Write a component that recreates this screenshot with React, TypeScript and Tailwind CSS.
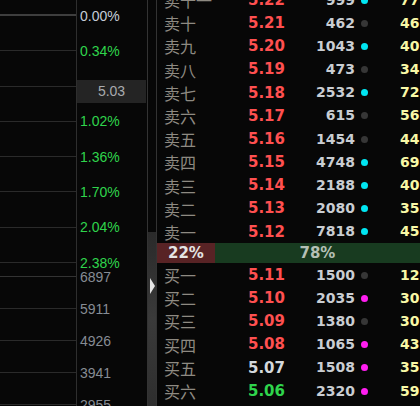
import React from 'react';

type Row = {
  label: string;
  price: string;
  qty: string;
  dot: 'c' | 'g' | 'm';
  last: string;
  priceColor?: string;
};

const sells: Row[] = [
  { label: '卖十一', price: '5.22', qty: '999', dot: 'c', last: '77' },
  { label: '卖十', price: '5.21', qty: '462', dot: 'g', last: '46' },
  { label: '卖九', price: '5.20', qty: '1043', dot: 'c', last: '40' },
  { label: '卖八', price: '5.19', qty: '473', dot: 'g', last: '34' },
  { label: '卖七', price: '5.18', qty: '2532', dot: 'c', last: '72' },
  { label: '卖六', price: '5.17', qty: '615', dot: 'g', last: '56' },
  { label: '卖五', price: '5.16', qty: '1454', dot: 'g', last: '44' },
  { label: '卖四', price: '5.15', qty: '4748', dot: 'c', last: '69' },
  { label: '卖三', price: '5.14', qty: '2188', dot: 'c', last: '40' },
  { label: '卖二', price: '5.13', qty: '2080', dot: 'c', last: '35' },
  { label: '卖一', price: '5.12', qty: '7818', dot: 'c', last: '45' },
];

const buys: Row[] = [
  { label: '买一', price: '5.11', qty: '1500', dot: 'g', last: '12' },
  { label: '买二', price: '5.10', qty: '2035', dot: 'm', last: '30' },
  { label: '买三', price: '5.09', qty: '1380', dot: 'g', last: '30' },
  { label: '买四', price: '5.08', qty: '1065', dot: 'm', last: '43' },
  { label: '买五', price: '5.07', qty: '1508', dot: 'm', last: '35', priceColor: 'text-[#d4d8dc]' },
  { label: '买六', price: '5.06', qty: '2320', dot: 'm', last: '59', priceColor: 'text-[#2fd44c]' },
  { label: '买七', price: '5.05', qty: '1876', dot: 'm', last: '41', priceColor: 'text-[#2fd44c]' },
];

const dotColor = {
  c: 'bg-[#00e6f2]',
  g: 'bg-[#363636]',
  m: 'bg-[#ff1ef0]',
};

const percents = ['0.00%', '0.34%', '', '1.02%', '1.36%', '1.70%', '2.04%', '2.38%'];
const volumes = ['6897', '5911', '4926', '3941', '2955'];

const BookRow = ({ row }: { row: Row }) => (
  <div className="flex items-center h-[23.2px] shrink-0 whitespace-nowrap">
    <div className="w-[57px] pl-[7px] text-[16px] leading-none text-[#8e8a82] font-['Noto_Sans_CJK_SC',sans-serif]">
      {row.label}
    </div>
    <div
      className={`w-[71px] text-right text-[15px] font-bold font-['DejaVu_Sans',sans-serif] ${
        row.priceColor ?? 'text-[#ff5050]'
      }`}
    >
      {row.price}
    </div>
    <div className="w-[70px] text-right text-[14px] font-bold text-[#c9cdd2] font-['DejaVu_Sans',sans-serif]">
      {row.qty}
    </div>
    <div className={`ml-[6px] w-[7px] h-[7px] rounded-full ${dotColor[row.dot]}`} />
    <div className="ml-[32px] text-[14px] font-bold text-[#f8f8a6] font-['DejaVu_Sans',sans-serif]">
      {row.last}
    </div>
  </div>
);

export default function App() {
  return (
    <div className="w-[420px] h-[406px] bg-[#070707] overflow-hidden flex font-['Liberation_Sans',Arial,sans-serif]">
      {/* chart grid */}
      <div className="w-[77px] shrink-0 flex flex-col border-r border-[#2e2e2e]">
        <div className="h-[277px] shrink-0 flex flex-col border-b border-[#333]">
          <div className="h-[16px] shrink-0 border-b-2 border-[#3e3e3e]" />
          {[0, 1, 2, 3, 4, 5, 6].map((i) => (
            <div key={i} className="h-[35.3px] shrink-0 border-b border-[#2a2a2a]" />
          ))}
        </div>
        <div className="flex flex-col">
          {[0, 1, 2, 3].map((i) => (
            <div key={i} className="h-[32px] shrink-0 border-b border-[#2a2a2a]" />
          ))}
        </div>
      </div>

      {/* axis labels */}
      <div className="w-[70px] shrink-0 flex flex-col">
        <div className="h-[277px] shrink-0 flex flex-col -mt-[1.6px]">
          {percents.map((p, i) =>
            i === 2 ? (
              <div key={i} className="h-[35.3px] shrink-0 flex items-end pb-[1px]">
                <div className="w-[69px] h-[23px] bg-[#242424] flex items-center justify-center text-[14px] text-[#a9abae]">
                  5.03
                </div>
              </div>
            ) : (
              <div
                key={i}
                className={`h-[35.3px] shrink-0 flex items-center pl-[3px] text-[14px] ${
                  i === 0 ? 'text-[#c4ccd6]' : 'text-[#2fd44c]'
                }`}
              >
                {p}
              </div>
            )
          )}
        </div>
        <div className="flex flex-col -mt-[14px]">
          {volumes.map((v) => (
            <div key={v} className="h-[32px] shrink-0 flex items-center pl-[3px] text-[14px] text-[#868c94]">
              {v}
            </div>
          ))}
        </div>
      </div>

      {/* splitter */}
      <div className="w-[10px] shrink-0 flex flex-col border-l border-[#2c2c2c] border-r border-[#333]">
        <div className="h-[232px] shrink-0" />
        <div className="flex-1 bg-gradient-to-b from-[#2a2a2a] via-[#3a3a3a] to-[#2e2e2e] flex flex-col items-start pt-[46px] pl-[2px]">
          <svg width="5" height="16" viewBox="0 0 5 16">
            <path d="M0 0 L5 8 L0 16 Z" fill="#e6e6e6" />
          </svg>
        </div>
      </div>

      {/* order book */}
      <div className="flex-1 flex flex-col overflow-hidden">
        <div className="flex flex-col -mt-[11.6px]">
          {sells.map((r) => (
            <BookRow key={r.label} row={r} />
          ))}
          <div className="h-[20px] shrink-0 flex text-[15px] font-bold font-['DejaVu_Sans',sans-serif]">
            <div className="w-[22%] bg-[#582325] flex items-center justify-center text-[#e4e4e4]">22%</div>
            <div className="flex-1 bg-[#183b20] flex items-center justify-center text-[#b4c0b6]">78%</div>
          </div>
          {buys.map((r) => (
            <BookRow key={r.label} row={r} />
          ))}
        </div>
      </div>
    </div>
  );
}
